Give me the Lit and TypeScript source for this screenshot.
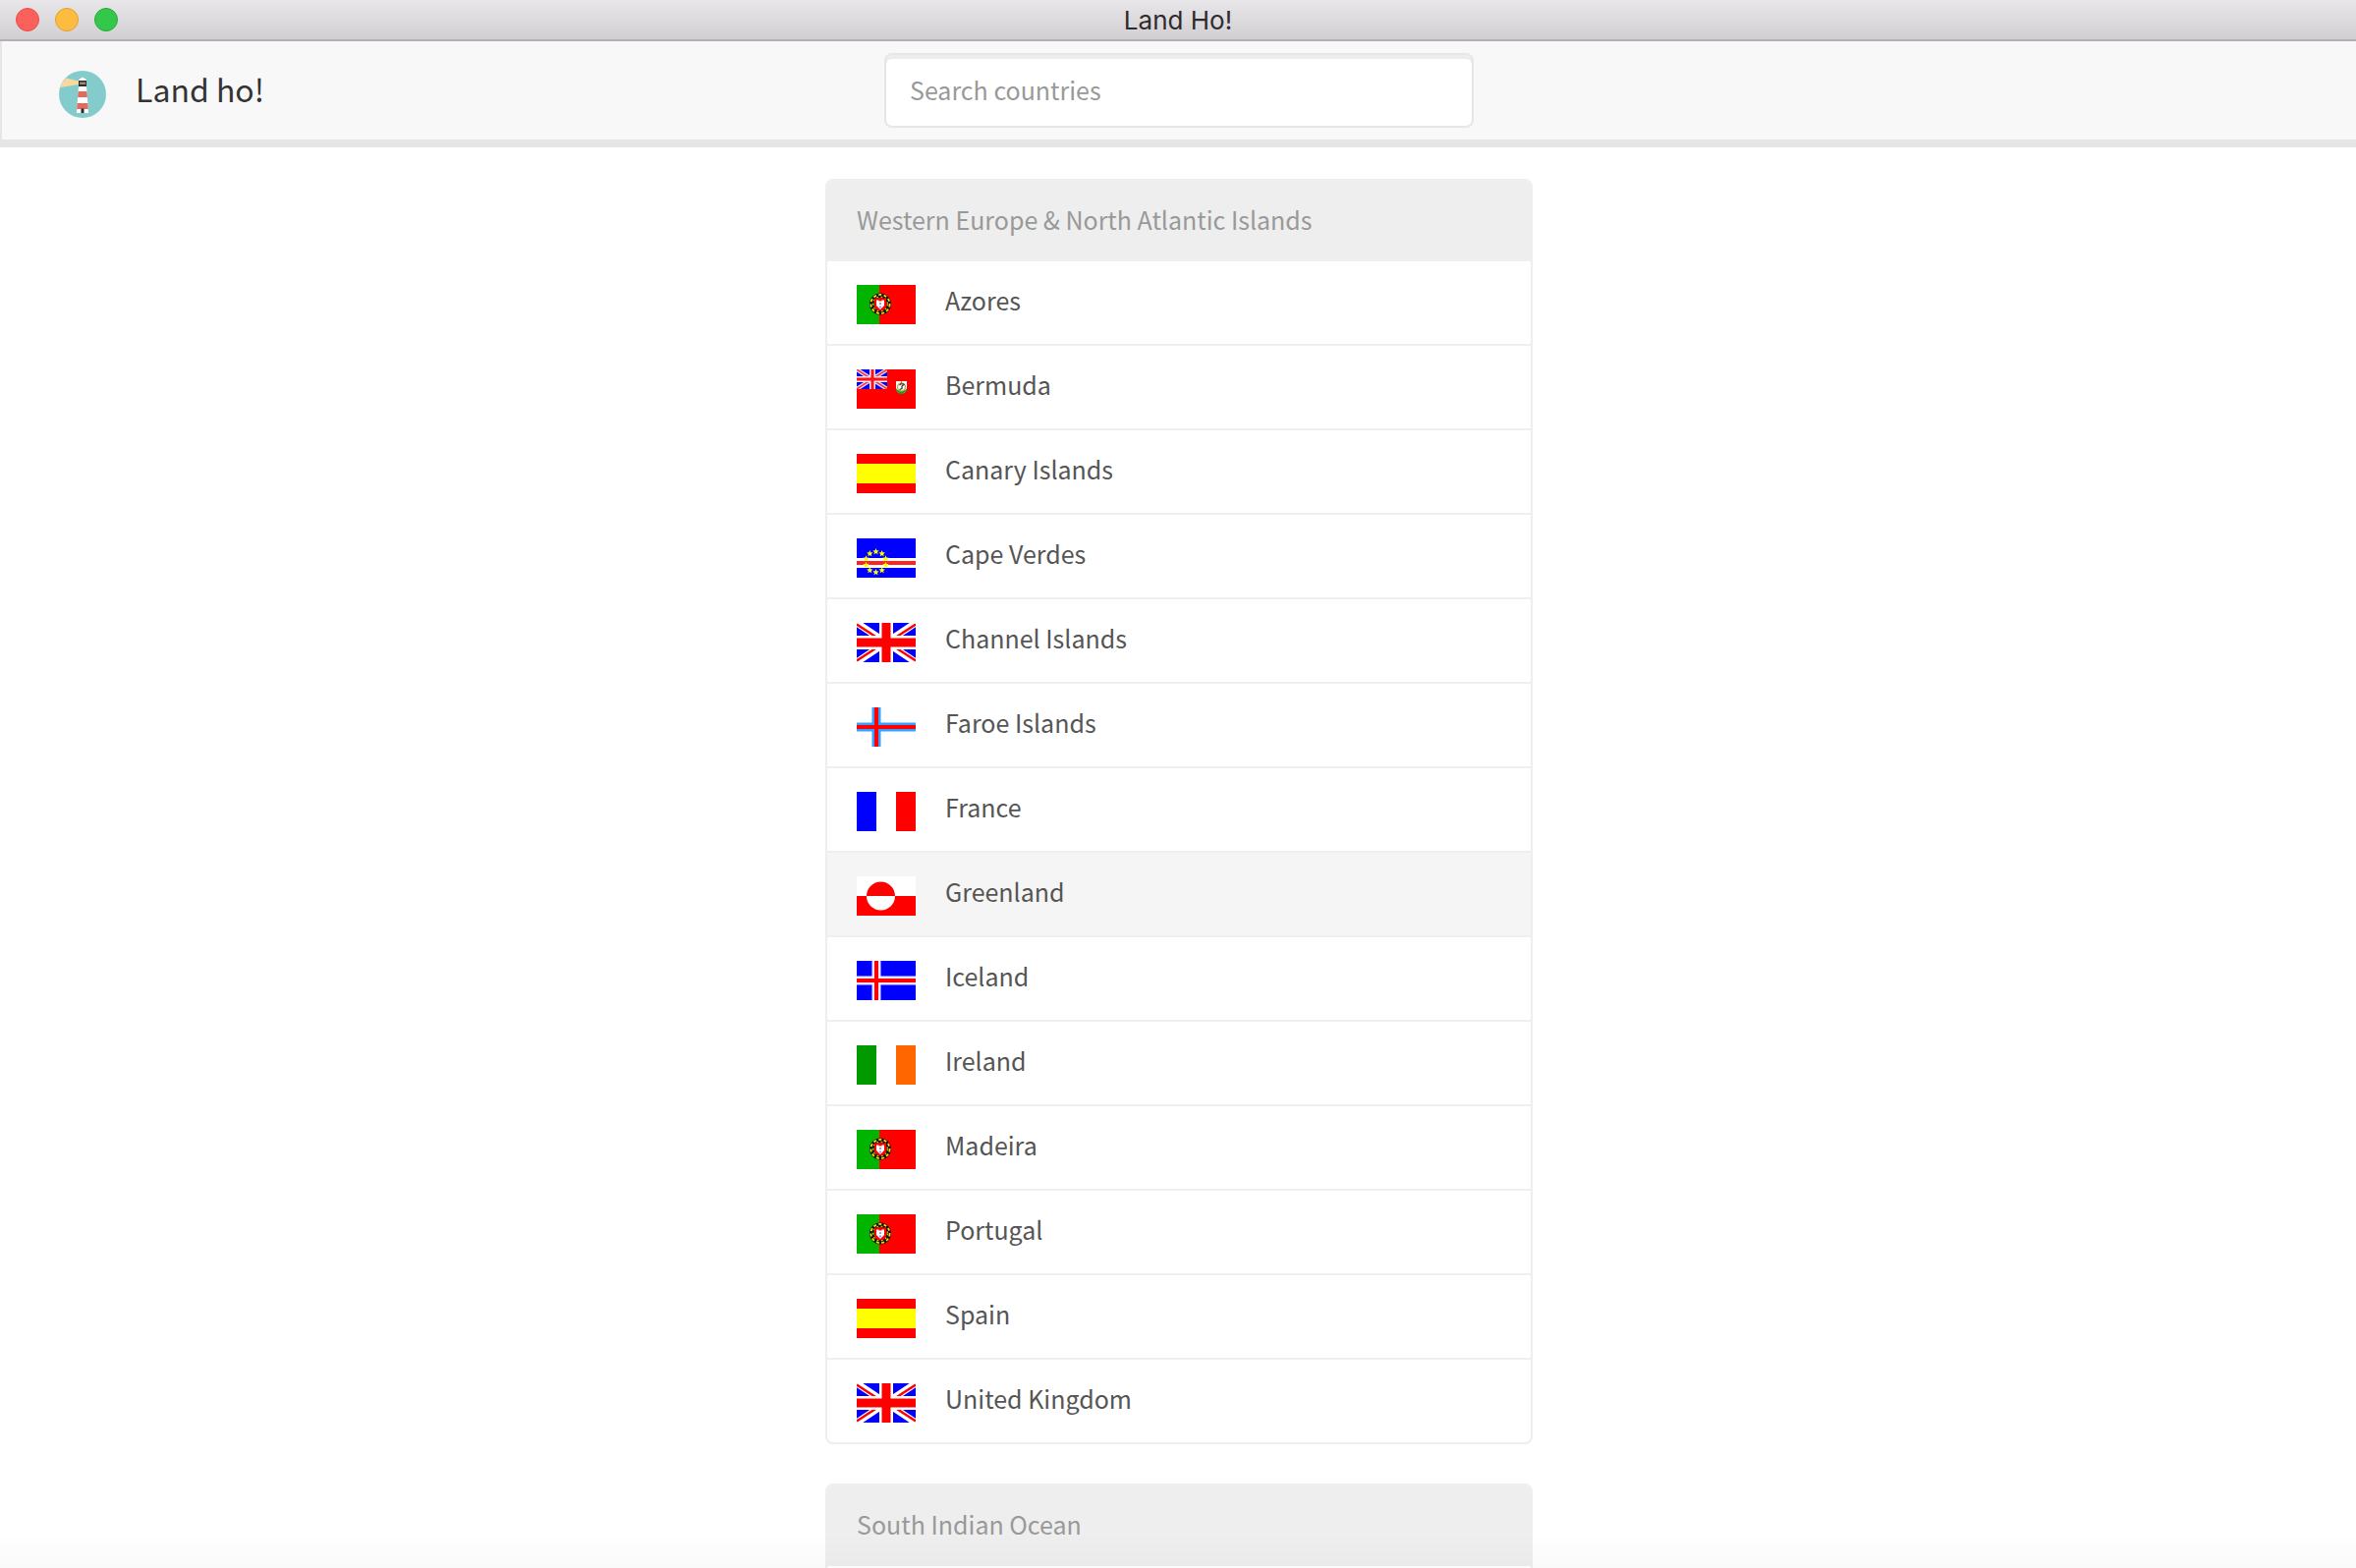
import { LitElement, html, css, svg, SVGTemplateResult } from "lit";
import { customElement, property } from "lit/decorators.js";
import { classMap } from "lit/directives/class-map.js";

interface Country {
  name: string;
  flag: string;
  active?: boolean;
}

interface Region {
  name: string;
  countries: Country[];
}

const regions: Region[] = [
  {
    name: "Western Europe & North Atlantic Islands",
    countries: [
      { name: "Azores", flag: "pt" },
      { name: "Bermuda", flag: "bm" },
      { name: "Canary Islands", flag: "es" },
      { name: "Cape Verdes", flag: "cv" },
      { name: "Channel Islands", flag: "gb" },
      { name: "Faroe Islands", flag: "fo" },
      { name: "France", flag: "fr" },
      { name: "Greenland", flag: "gl", active: true },
      { name: "Iceland", flag: "is" },
      { name: "Ireland", flag: "ie" },
      { name: "Madeira", flag: "pt" },
      { name: "Portugal", flag: "pt" },
      { name: "Spain", flag: "es" },
      { name: "United Kingdom", flag: "gb" },
    ],
  },
  { name: "South Indian Ocean", countries: [] },
];

const star = (cx: number, cy: number, r: number) => {
  const points = Array.from({ length: 10 }, (_, i) => {
    const a = (Math.PI / 5) * i - Math.PI / 2;
    const d = i % 2 ? r * 0.45 : r;
    return `${(cx + d * Math.cos(a)).toFixed(2)},${(cy + d * Math.sin(a)).toFixed(2)}`;
  });
  return svg`<polygon points=${points.join(" ")} fill="#ff0"/>`;
};

const flags: Record<string, SVGTemplateResult> = {
  pt: svg`
    <rect width="60" height="40" fill="#f00"/>
    <rect width="23" height="40" fill="#00b400"/>
    <circle cx="24" cy="19.5" r="8.8" fill="none" stroke="#111" stroke-width="4.4"/>
    <circle cx="24" cy="19.5" r="9.6" fill="none" stroke="#f5e000" stroke-width="1.8" stroke-dasharray="3 2.4"/>
    <circle cx="24" cy="19.5" r="7.4" fill="none" stroke="#d8c800" stroke-width="1.2" stroke-dasharray="1.8 2.6"/>
    <path d="M18 13.500h12v7a6 6 0 0 1-12 0z" fill="#f00"/>
    <path d="M20 15.500h2.500v1h3v-1H28v5.500l-4 4-4-4z" fill="#fff"/>
    <path d="M23 18h2v2h-2zM23 21.500h2v2h-2z" fill="#8aa8f0"/>`,
  bm: svg`
    <rect width="60" height="40" fill="#f00"/>
    <svg width="31" height="20" viewBox="0 0 31 20">
      <rect width="31" height="20" fill="#00f"/>
      <path d="M0 0l31 20M31 0L0 20" stroke="#e4d8f0" stroke-width="4"/>
      <path d="M0 0l31 20M31 0L0 20" stroke="#f33" stroke-width="1.500"/>
      <path d="M16 0v20M0 10h31" stroke="#f4e8f4" stroke-width="6"/>
      <path d="M16 0v20M0 10h31" stroke="#f11" stroke-width="3"/>
    </svg>
    <path d="M40 12h11v7a5.500 5.500 0 0 1-11 0z" fill="#fff"/>
    <path d="M40 19.500l1.500 1.500h8l1.500-1.500v2.500l-2 1-1.500 2h-4l-1.500-2-2-1z" fill="#1a9a20"/>
    <circle cx="45.500" cy="18" r="4" fill="#fff" stroke="#b9b04a" stroke-width="1.500"/>
    <path d="M43.500 16l2-1.500 2.500 1-2 1.500v2.500l-2.500 1" fill="none" stroke="#333" stroke-width="1.200"/>
    <path d="M45 12h1v2.500h-1z" fill="#e55"/>`,
  es: svg`
    <rect width="60" height="40" fill="#f00"/>
    <rect y="10" width="60" height="20" fill="#ff0"/>`,
  cv: svg`
    <rect width="60" height="40" fill="#00f"/>
    <rect y="20" width="60" height="10" fill="#fff"/>
    <rect y="23" width="60" height="4" fill="#f22"/>
    ${Array.from({ length: 10 }, (_, i) => {
      const a = (Math.PI / 5) * i - Math.PI / 2;
      return star(19.5 + 10.5 * Math.cos(a), 24 + 10.5 * Math.sin(a), 3.4);
    })}`,
  gb: svg`
    <rect width="60" height="40" fill="#00f"/>
    <path d="M0 0l60 40M60 0L0 40" stroke="#fff" stroke-width="7"/>
    <path d="M0 1.500L20 14.500M60 1.500L40 14.500M0 38.500L20 25.500M60 38.500L40 25.500" stroke="#f00" stroke-width="2.400"/>
    <path d="M30 0v40M0 20h60" stroke="#fff" stroke-width="14"/>
    <path d="M30 0v40M0 20h60" stroke="#f00" stroke-width="9"/>`,
  fo: svg`
    <rect width="60" height="40" fill="#fff"/>
    <path d="M20 0v40M0 20h60" stroke="#3aa0ff" stroke-width="9"/>
    <path d="M20 0v40M0 20h60" stroke="#f00" stroke-width="4"/>`,
  fr: svg`
    <rect width="60" height="40" fill="#fff"/>
    <rect width="20" height="40" fill="#00f"/>
    <rect x="40" width="20" height="40" fill="#f00"/>`,
  gl: svg`
    <rect width="60" height="40" fill="#fff"/>
    <rect y="20" width="60" height="20" fill="#f00"/>
    <path d="M10 20a14.500 14.500 0 0 1 29 0z" fill="#f00"/>
    <path d="M10 20a14.500 14.500 0 0 0 29 0z" fill="#fff"/>`,
  is: svg`
    <rect width="60" height="40" fill="#00f"/>
    <path d="M20 0v40M0 20h60" stroke="#eee6ff" stroke-width="9"/>
    <path d="M20 0v40M0 20h60" stroke="#f00" stroke-width="4"/>`,
  ie: svg`
    <rect width="60" height="40" fill="#fff"/>
    <rect width="20" height="40" fill="#090"/>
    <rect x="40" width="20" height="40" fill="#f60"/>`,
};

@customElement("title-bar")
export class TitleBar extends LitElement {
  static styles = css`
    :host {
      display: grid;
      grid-template-columns: 1fr auto 1fr;
      align-items: center;
      box-sizing: border-box;
      height: 42px;
      padding: 0 16px;
      border-bottom: 2px solid #b3b0b3;
      background: linear-gradient(#e8e6e8, #d1cfd1);
    }
    .lights {
      display: flex;
      gap: 16px;
    }
    .light {
      width: 24px;
      height: 24px;
      padding: 0;
      border: 1px solid;
      border-radius: 50%;
    }
    .close {
      background: #fc605c;
      border-color: #e2504c;
    }
    .minimize {
      background: #fdbc40;
      border-color: #e0a030;
    }
    .zoom {
      background: #34c84a;
      border-color: #25ab38;
    }
    .title {
      padding-top: 2px;
      font: 26px/38px Inter, "Liberation Sans", sans-serif;
      color: #2e2b2e;
    }
  `;

  render() {
    return html`
      <div class="lights">
        <button class="light close" aria-label="Close"></button>
        <button class="light minimize" aria-label="Minimize"></button>
        <button class="light zoom" aria-label="Zoom"></button>
      </div>
      <div class="title">Land Ho!</div>
    `;
  }
}

@customElement("app-header")
export class AppHeader extends LitElement {
  static styles = css`
    :host {
      display: grid;
      grid-template-columns: 1fr minmax(0, 600px) 1fr;
      align-items: center;
      box-sizing: border-box;
      height: 108px;
      border-bottom: 8px solid #e6e6e6;
      border-left: 2px solid #e6e6e6;
      background: #f8f8f8;
    }
    .brand {
      display: flex;
      align-items: center;
      gap: 30px;
      padding-left: 58px;
    }
    .logo {
      width: 48px;
      height: 48px;
      margin-top: 8px;
    }
    .name {
      margin: 0;
      padding-bottom: 4px;
      font-size: 32px;
      font-weight: 400;
      line-height: 48px;
      color: #333;
    }
    .search {
      box-sizing: border-box;
      width: 100%;
      height: 76px;
      padding: 0 24px 2px;
      border: 2px solid #e6e6e6;
      border-radius: 8px;
      background: #fff;
      box-shadow: inset 0 4px #ececec;
      font: inherit;
      color: #555;
      outline: none;
    }
    .search::placeholder {
      color: #999;
      opacity: 1;
    }
  `;

  render() {
    return html`
      <div class="brand">
        <svg class="logo" viewBox="0 0 48 48" aria-hidden="true">
          <circle cx="24" cy="24" r="24" fill="#84cccb" />
          <path d="M20 10.500L7.500 7.500A24 24 0 0 0 .8 17L20 14z" fill="#fbd7a0" />
          <path d="M20 10q0-2 2.500-2.600L24 6.500l1.500.9Q28 8 28 10z" fill="#fff" />
          <path d="M20 16h8l2 27H18z" fill="#fff" />
          <path d="M19.600 21h8.800l.5 6h-9.800zM18.700 33h10.600l.5 6H18.200z" fill="#e5695d" />
          <rect x="20" y="10" width="8" height="6" fill="#262c3c" />
          <path d="M21.500 11.500h1.300v2.500h-1.300zM23.500 11.500h1.300v2.500h-1.300zM25.500 11.500h1.300v2.500h-1.300z" fill="#f3b95c" />
          <rect x="22.500" y="38.500" width="3" height="4.500" fill="#262c3c" />
        </svg>
        <h1 class="name">Land ho!</h1>
      </div>
      <input class="search" type="search" placeholder="Search countries" aria-label="Search countries" />
    `;
  }
}

@customElement("region-panel")
export class RegionPanel extends LitElement {
  static styles = css`
    :host {
      display: block;
      box-sizing: border-box;
      border: 2px solid #eee;
      border-radius: 8px;
      overflow: hidden;
    }
    .heading {
      margin: 0;
      padding: 18px 30px 22px;
      background: #eee;
      font-size: inherit;
      font-weight: 400;
      line-height: 42px;
      color: #999;
    }
    .list {
      margin: 0;
      padding: 0;
      min-height: 84px;
      list-style: none;
    }
    .item + .item {
      border-top: 2px solid #eee;
    }
    .country {
      display: flex;
      align-items: center;
      gap: 30px;
      padding: 18px 30px;
      color: #555;
      text-decoration: none;
    }
    .country.active,
    .country:hover {
      background: #f5f5f5;
    }
    .flag {
      width: 60px;
      height: 40px;
      margin-top: 4px;
    }
    .label {
      line-height: 42px;
      padding-bottom: 6px;
    }
  `;

  @property({ attribute: false }) region!: Region;

  render() {
    return html`
      <h2 class="heading">${this.region.name}</h2>
      <ul class="list">
        ${this.region.countries.map(
          (c) => html`
            <li class="item">
              <a class=${classMap({ country: true, active: !!c.active })} href="#">
                <svg class="flag" viewBox="0 0 60 40" aria-hidden="true">${flags[c.flag]}</svg>
                <span class="label">${c.name}</span>
              </a>
            </li>
          `
        )}
      </ul>
    `;
  }
}

@customElement("app-root")
export class AppRoot extends LitElement {
  static styles = css`
    :host {
      display: flex;
      flex-direction: column;
      position: relative;
      height: 100vh;
      overflow: hidden;
      background: #fff;
      font: 25px/42px "Noto Sans CJK SC", "Open Sans", sans-serif;
    }
    .bar {
      flex: none;
    }
    .content {
      flex: 1;
      min-height: 0;
      overflow: hidden;
      display: flex;
      flex-direction: column;
      align-items: center;
      gap: 40px;
      padding: 32px 0 0 2px;
    }
    .panel {
      flex: none;
      width: 100%;
      max-width: 720px;
    }
    .fade {
      position: absolute;
      inset: auto 0 0;
      height: 36px;
      background: linear-gradient(transparent, rgba(0, 0, 0, 0.02));
      pointer-events: none;
    }
  `;

  render() {
    return html`
      <title-bar class="bar"></title-bar>
      <app-header class="bar"></app-header>
      <main class="content">
        ${regions.map((r) => html`<region-panel class="panel" .region=${r}></region-panel>`)}
      </main>
      <div class="fade"></div>
    `;
  }
}
